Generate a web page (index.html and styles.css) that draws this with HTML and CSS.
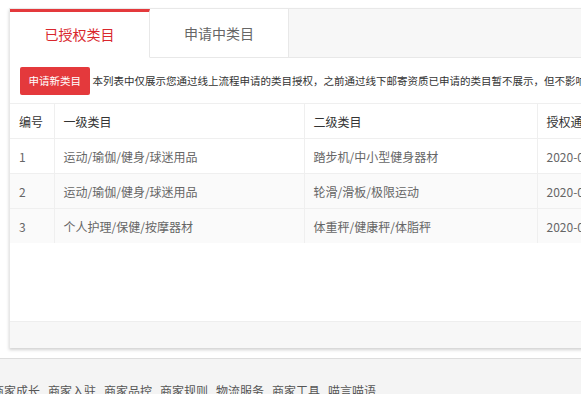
FILE: index.html
```html
<!DOCTYPE html>
<html lang="zh-CN">
<head>
    <meta charset="UTF-8">
    <meta name="viewport" content="width=device-width, initial-scale=1.0">
    <title>类目管理</title>
    <link rel="stylesheet" href="styles.css">
</head>
<body>
    <div class="main">
        <div class="panel">
            <div class="tabs">
                <a class="tab active">已授权类目</a>
                <a class="tab">申请中类目</a>
                <div class="tab-fill"></div>
            </div>

            <div class="panel-body">
                <div class="toolbar">
                    <button class="btn-red">申请新类目</button>
                    <span class="notice">本列表中仅展示您通过线上流程申请的类目授权，之前通过线下邮寄资质已申请的类目暂不展示，但不影响您正常发布商品。</span>
                </div>

                <div class="table-wrap">
                    <table class="grid">
                        <colgroup>
                            <col class="col-no">
                            <col class="col-first">
                            <col class="col-second">
                            <col class="col-time">
                        </colgroup>
                        <thead>
                            <tr>
                                <th>编号</th>
                                <th>一级类目</th>
                                <th>二级类目</th>
                                <th>授权通过时间</th>
                            </tr>
                        </thead>
                        <tbody>
                            <tr>
                                <td>1</td>
                                <td>运动/瑜伽/健身/球迷用品</td>
                                <td>踏步机/中小型健身器材</td>
                                <td>2020-04-16 10:23:41</td>
                            </tr>
                            <tr>
                                <td>2</td>
                                <td>运动/瑜伽/健身/球迷用品</td>
                                <td>轮滑/滑板/极限运动</td>
                                <td>2020-04-16 10:23:41</td>
                            </tr>
                            <tr>
                                <td>3</td>
                                <td>个人护理/保健/按摩器材</td>
                                <td>体重秤/健康秤/体脂秤</td>
                                <td>2020-04-16 10:23:41</td>
                            </tr>
                        </tbody>
                    </table>
                </div>
            </div>

            <div class="panel-foot"></div>
        </div>
    </div>

    <div class="footer">
        <div class="footer-links">
            <a>商家成长</a>
            <a>商家入驻</a>
            <a>商家品控</a>
            <a>商家规则</a>
            <a>物流服务</a>
            <a>商家工具</a>
            <a>喵言喵语</a>
        </div>
    </div>
</body>
</html>
```

FILE: styles.css
```css
html, body {
    margin: 0;
    padding: 0;
    overflow: hidden;
}
body {
    font-family: "Noto Sans CJK SC", "Noto Sans", sans-serif;
    font-size: 12px;
    color: #333;
    background-color: #fff;
    width: 581px;
    height: 394px;
}
.main {
    padding: 8px 0 0 9px;
    margin-bottom: 10px;
}
.panel {
    width: 660px;
    border-top: 1px solid #e8e8e8;
    border-left: 1px solid #e8e8e8;
    background-color: #fff;
    box-shadow: 0 2px 3px rgba(0,0,0,0.18);
}

/* tabs */
.tabs {
    display: flex;
    height: 48px;
    border-bottom: 1px solid #e8e8e8;
}
.tab {
    width: 139px;
    height: 48px;
    line-height: 48px;
    text-align: center;
    font-size: 14px;
    color: #666;
    border-right: 1px solid #e8e8e8;
    box-sizing: border-box;
    cursor: pointer;
}
.tab.active {
    width: 140px;
    height: 49px;
    line-height: 44px;
    color: #d9272e;
    border-top: 3px solid #e4393c;
    border-bottom: 1px solid #fff;
    margin-bottom: -1px;
    background-color: #fff;
}
.tab-fill {
    flex: 1;
    background-color: #f7f7f7;
}

/* toolbar */
.toolbar {
    display: flex;
    align-items: center;
    height: 45px;
    padding-left: 10px;
    white-space: nowrap;
    overflow: hidden;
}
.btn-red {
    height: 28px;
    width: 71px;
    padding: 0;
    border: none;
    border-radius: 2px;
    background-color: #e4393c;
    color: #fff;
    font-family: inherit;
    font-size: 10.5px;
    cursor: pointer;
}
.notice {
    margin-left: 3px;
    font-size: 10.5px;
    color: #333;
}

/* table */
.table-wrap {
    height: 218px;
}
.grid {
    border-collapse: collapse;
    table-layout: fixed;
    width: 660px;
}
.col-no { width: 44px; }
.col-first { width: 250px; }
.col-second { width: 233px; }
.col-time { width: 133px; }
.grid th,
.grid td {
    height: 34px;
    padding: 0 9px;
    text-align: left;
    font-weight: normal;
    white-space: nowrap;
    overflow: hidden;
    border-top: 1px solid #efefef;
    border-right: 1px solid #efefef;
}
.grid th {
    color: #333;
}
.grid td {
    color: #666;
}
.grid tbody tr:nth-child(n+2) {
    background-color: #fafafa;
}

.panel-foot {
    height: 26px;
    border-top: 1px solid #eee;
    background-color: #f7f7f7;
}

/* footer */
.footer {
    border-top: 1px solid #ddd;
    background-color: #f4f4f4;
    height: 60px;
    padding-top: 23px;
    box-sizing: border-box;
}
.footer-links {
    display: flex;
    gap: 8px;
    margin-left: -8px;
}
.footer-links a {
    color: #555;
    font-size: 12px;
    line-height: 18px;
}
```
